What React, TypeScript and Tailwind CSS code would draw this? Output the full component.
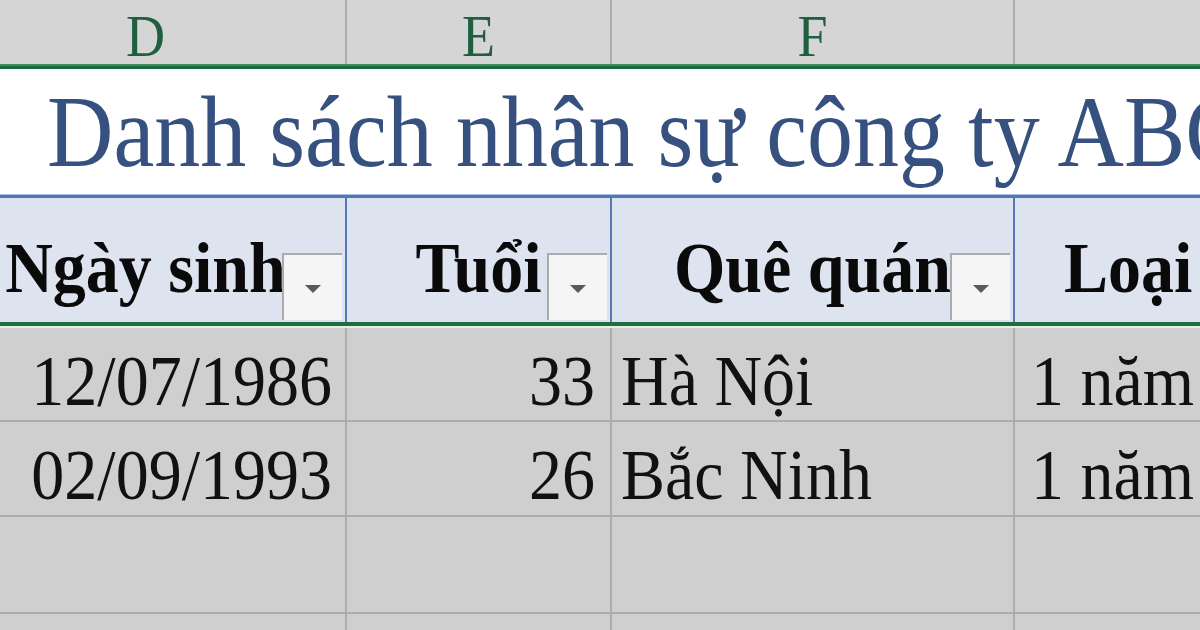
import React from "react";

const COLS = "grid grid-cols-[401px_265px_403px_600px]";

function FilterBtn() {
  return (
    <div className="absolute right-[3px] bottom-[2px] w-[60px] h-[67px] bg-[#f5f5f5] border-l-2 border-t-2 border-[#ababab] flex items-center justify-center">
      <svg width="18" height="10" viewBox="0 0 18 10" className="mt-[3px]">
        <polygon points="1,1 17,1 9,9" fill="#5a5a5a" />
      </svg>
    </div>
  );
}

function ColLetter({ ch, last }: { ch: string; last?: boolean }) {
  return (
    <div
      className={
        "h-full flex justify-center " +
        (last ? "" : "border-r-2 border-[#acacac]")
      }
    >
      <span className="block pt-[6px] text-[54px] leading-none origin-top scale-y-110 text-[#1f5f3f] font-['Liberation_Serif','Times_New_Roman',serif]">
        {ch}
      </span>
    </div>
  );
}

function HeadCell({
  text,
  filter,
  last,
  left,
}: {
  text: string;
  filter?: boolean;
  last?: boolean;
  left?: boolean;
}) {
  return (
    <div
      className={
        "relative h-full overflow-hidden " +
        (last ? "" : "border-r-2 border-[#5877b6] ") +
        (left ? "pl-[49px]" : "flex justify-center")
      }
    >
      <span className="block pt-[30px] whitespace-nowrap text-[66px] font-bold leading-none origin-top scale-y-110 text-[#0a0a0a] font-['Liberation_Serif','Times_New_Roman',serif]">
        {text}
      </span>
      {filter && <FilterBtn />}
    </div>
  );
}

function DataCell({
  text,
  align,
  last,
  pad,
}: {
  text?: string;
  align: "left" | "right";
  last?: boolean;
  pad: string;
}) {
  return (
    <div
      className={
        "h-full overflow-hidden flex " +
        (align === "right" ? "justify-end " : "justify-start ") +
        (last ? "" : "border-r-2 border-[#adadad] ") +
        pad
      }
    >
      {text && (
        <span className="block pt-[15px] whitespace-nowrap text-[66px] leading-none origin-top scale-y-110 text-[#111111] font-['Liberation_Serif','Times_New_Roman',serif]">
          {text}
        </span>
      )}
    </div>
  );
}

function DataRow({
  h,
  cells,
}: {
  h: string;
  cells: [string?, string?, string?, string?];
}) {
  return (
    <div className={COLS + " bg-[#cfcfcf] border-b-2 border-[#acacac] " + h}>
      <DataCell text={cells[0]} align="right" pad="pr-[13px]" />
      <DataCell text={cells[1]} align="right" pad="pr-[15px]" />
      <DataCell text={cells[2]} align="left" pad="pl-[9px]" />
      <DataCell text={cells[3]} align="left" pad="pl-[16px]" last />
    </div>
  );
}

export default function App() {
  return (
    <div className="w-[1200px] h-[630px] overflow-hidden bg-[#cfcfcf] font-['Liberation_Serif','Times_New_Roman',serif]">
      <div className="ml-[-54px] w-[1669px] flex flex-col">
        {/* column letters */}
        <div className={COLS + " h-[64px] bg-[#d5d5d5]"}>
          <ColLetter ch="D" />
          <ColLetter ch="E" />
          <ColLetter ch="F" />
          <ColLetter ch="G" last />
        </div>
        <div className="h-[2px] bg-[#3f8a5f]" />
        <div className="h-[3px] bg-[#1c6b40]" />

        {/* title row */}
        <div className="h-[125px] bg-white pl-[101px] overflow-hidden">
          <span className="block pt-[11px] whitespace-nowrap text-[92px] leading-none origin-top scale-y-110 text-[#36517f]">
            Danh sách nhân sự công ty ABC
          </span>
        </div>
        <div className="h-[1px] bg-[#a9bde2]" />
        <div className="h-[3px] bg-[#5574b4]" />

        {/* header row */}
        <div className={COLS + " h-[124px] bg-[#dde3ef]"}>
          <HeadCell text="Ngày sinh" filter />
          <HeadCell text="Tuổi" filter />
          <HeadCell text="Quê quán" filter />
          <HeadCell text="Loại hợp đồng" left last />
        </div>
        <div className="h-[4px] bg-[#1f6e42]" />
        <div className="h-[2px] bg-[#e4efe6]" />

        {/* data rows */}
        <DataRow h="h-[94px]" cells={["12/07/1986", "33", "Hà Nội", "1 năm"]} />
        <DataRow h="h-[95px]" cells={["02/09/1993", "26", "Bắc Ninh", "1 năm"]} />
        <DataRow h="h-[97px]" cells={[]} />
        <DataRow h="h-[94px]" cells={[]} />
      </div>
    </div>
  );
}
